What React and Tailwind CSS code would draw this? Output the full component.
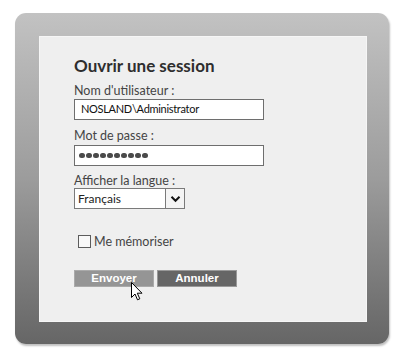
import React from "react";

export default function App() {
  const font = { fontFamily: 'Lato, "Noto Sans", sans-serif' };
  const btnFont = { fontFamily: '"Liberation Sans", Arial, sans-serif' };
  return (
    <div className="w-[400px] h-[353px] bg-white pt-[13px] pl-[15px]" style={font}>
      <div className="relative w-[374px] h-[331px] rounded-[11px] bg-gradient-to-b from-[#c2c2c2] via-[#9c9c9c] to-[#666666] pt-[23px] pl-[24px] shadow-[1px_2px_2px_rgba(0,0,0,0.25)]">
        <div className="w-[328px] h-[286px] bg-[#efefef] border border-[#f6f6f6] pl-[34px] pt-[18px]">
          <h1 className="text-[17px] leading-[22px] font-bold text-[#2e2e2e]">Ouvrir une session</h1>
          <div className="mt-[7px] text-[12.5px] leading-[14px] text-[#444]">Nom d'utilisateur :</div>
          <div className="mt-[1px] w-[190px] h-[21px] bg-white border border-[#6e6e6e] flex items-center pl-[6px] text-[11px] tracking-[-0.3px] text-[#111]">
            NOSLAND\Administrator
          </div>
          <div className="mt-[9px] text-[12.5px] leading-[14px] text-[#444]">Mot de passe :</div>
          <div className="mt-[2px] w-[190px] h-[21px] bg-white border border-[#6e6e6e] flex items-center pl-[4px] gap-[1.5px]">
            {Array.from({ length: 10 }).map((_, i) => (
              <span key={i} className="w-[5.5px] h-[5.5px] rounded-full bg-[#4a4a4a]" />
            ))}
          </div>
          <div className="mt-[8px] text-[12.5px] leading-[14px] text-[#444]">Afficher la langue :</div>
          <div className="mt-[0px] w-[111px] h-[21px] bg-white border border-[#7a7a7a] flex">
            <div className="flex-1 flex items-center pl-[3px] text-[12px] text-[#222]">Français</div>
            <div className="w-[19px] h-full border-l border-[#7a7a7a] bg-[#f4f4f4] flex items-center justify-center">
              <svg width="11" height="8" viewBox="0 0 11 8">
                <path d="M1.5 1.8 L5.5 5.8 L9.5 1.8" fill="none" stroke="#111" strokeWidth="2" />
              </svg>
            </div>
          </div>
          <div className="mt-[26px] ml-[4px] flex items-center gap-[3px] h-[13px]">
            <div className="w-[13px] h-[13px] border border-[#5c5c5c] bg-[#f8f8f8]" />
            <span className="text-[12.5px] leading-[14px] text-[#444]">Me mémoriser</span>
          </div>
          <div className="mt-[22px] flex gap-[3px]">
            <div className="w-[80px] h-[17px] bg-[#959595] border border-[#aaa] flex items-center justify-center text-white font-bold text-[11.5px]" style={btnFont}>
              Envoyer
            </div>
            <div className="w-[80px] h-[17px] bg-[#666666] border border-[#999] flex items-center justify-center text-white font-bold text-[11.5px]" style={btnFont}>
              Annuler
            </div>
          </div>
        </div>
        <svg className="absolute left-[116px] top-[269px]" width="12" height="19" viewBox="0 0 12 19">
          <path d="M0.5 0.5 L0.5 15.5 L4 12 L6.5 17.8 L8.8 16.8 L6.3 11.2 L11 11.2 Z" fill="#fff" stroke="#000" strokeWidth="1" strokeLinejoin="miter" />
        </svg>
      </div>
    </div>
  );
}
